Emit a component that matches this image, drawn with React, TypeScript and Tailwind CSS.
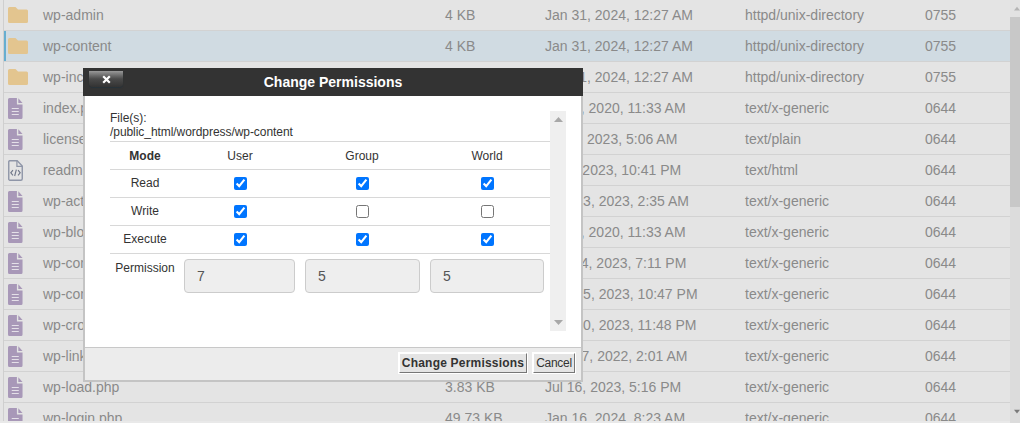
import React from 'react';

const files = [
  { icon: 'folder', name: 'wp-admin', size: '4 KB', date: 'Jan 31, 2024, 12:27 AM', type: 'httpd/unix-directory', perm: '0755' },
  { icon: 'folder', name: 'wp-content', size: '4 KB', date: 'Jan 31, 2024, 12:27 AM', type: 'httpd/unix-directory', perm: '0755', selected: true },
  { icon: 'folder', name: 'wp-includes', size: '4 KB', date: 'Jan 31, 2024, 12:27 AM', type: 'httpd/unix-directory', perm: '0755' },
  { icon: 'file', name: 'index.php', size: '405 bytes', date: 'Feb 6, 2020, 11:33 AM', type: 'text/x-generic', perm: '0644' },
  { icon: 'file', name: 'license.txt', size: '19.91 KB', date: 'Jan 1, 2023, 5:06 AM', type: 'text/plain', perm: '0644' },
  { icon: 'code', name: 'readme.html', size: '7.4 KB', date: 'Jul 5, 2023, 10:41 PM', type: 'text/html', perm: '0644' },
  { icon: 'file', name: 'wp-activate.php', size: '7.39 KB', date: 'May 13, 2023, 2:35 AM', type: 'text/x-generic', perm: '0644' },
  { icon: 'file', name: 'wp-blog-header.php', size: '351 bytes', date: 'Feb 6, 2020, 11:33 AM', type: 'text/x-generic', perm: '0644' },
  { icon: 'file', name: 'wp-comments-post.php', size: '2.32 KB', date: 'Mar 14, 2023, 7:11 PM', type: 'text/x-generic', perm: '0644' },
  { icon: 'file', name: 'wp-config-sample.php', size: '2.94 KB', date: 'May 15, 2023, 10:47 PM', type: 'text/x-generic', perm: '0644' },
  { icon: 'file', name: 'wp-cron.php', size: '5.51 KB', date: 'May 30, 2023, 11:48 PM', type: 'text/x-generic', perm: '0644' },
  { icon: 'file', name: 'wp-links-opml.php', size: '2.44 KB', date: 'Nov 27, 2022, 2:01 AM', type: 'text/x-generic', perm: '0644' },
  { icon: 'file', name: 'wp-load.php', size: '3.83 KB', date: 'Jul 16, 2023, 5:16 PM', type: 'text/x-generic', perm: '0644' },
  { icon: 'file', name: 'wp-login.php', size: '49.73 KB', date: 'Jan 16, 2024, 8:23 AM', type: 'text/x-generic', perm: '0644' },
];

const rows = [
  { label: 'Read', user: true, group: true, world: true },
  { label: 'Write', user: true, group: false, world: false },
  { label: 'Execute', user: true, group: true, world: true },
];

function FileIcon({ kind }: { kind: string }) {
  if (kind === 'folder') {
    return (
      <svg width="20" height="16" viewBox="0 0 20 16" className="ml-[4px] shrink-0">
        <path d="M1.5 0H7.5L10 2.5H18.5A1.5 1.5 0 0 1 20 4V14.5A1.5 1.5 0 0 1 18.5 16H1.5A1.5 1.5 0 0 1 0 14.5V1.5A1.5 1.5 0 0 1 1.5 0Z" fill="#e3c58f" />
      </svg>
    );
  }
  if (kind === 'code') {
    return (
      <svg width="15" height="21" viewBox="0 0 16 21" preserveAspectRatio="none" className="ml-[4px] shrink-0">
        <path d="M1.8 0.8H9.8L15.2 6V18.7A1.5 1.5 0 0 1 13.7 20.2H1.8A1.2 1.2 0 0 1 0.8 18.7V2.2A1.2 1.2 0 0 1 1.8 0.8Z" fill="none" stroke="#8f96a8" strokeWidth="1.5" />
        <path d="M9.5 1V6.3H15" fill="none" stroke="#8f96a8" strokeWidth="1.3" />
        <path d="M5.3 10.2L3 12.8L5.3 15.4M10.7 10.2L13 12.8L10.7 15.4M8.9 9.6L7.1 16" fill="none" stroke="#6f7688" strokeWidth="1.2" />
      </svg>
    );
  }
  return (
    <svg width="15" height="21" viewBox="0 0 16 21" preserveAspectRatio="none" className="ml-[4px] shrink-0">
      <path d="M1.5 0H9.5V6.5H15.5V19.5A1.5 1.5 0 0 1 14 21H1.5A1.5 1.5 0 0 1 0 19.5V1.5A1.5 1.5 0 0 1 1.5 0Z" fill="#a898b8" />
      <path d="M11 0.3L15.5 5H11Z" fill="#a898b8" />
      <path d="M4 10.5H11.5M4 13.5H11.5M4 16.5H11.5" stroke="#e4e0e8" strokeWidth="1.2" />
    </svg>
  );
}

function FileRow({ file }: { file: (typeof files)[number] }) {
  return (
    <div className={`flex h-[31px] shrink-0 items-center border-b border-[#d2d2d2] ${file.selected ? 'bg-[#d0dbe2] shadow-[inset_2px_0_0_#66aed0]' : ''}`}>
      <div className="flex w-[39px] shrink-0 items-center">
        <FileIcon kind={file.icon} />
      </div>
      <div className="w-[402px] shrink-0">{file.name}</div>
      <div className="w-[100px] shrink-0">{file.size}</div>
      <div className="w-[200px] shrink-0">{file.date}</div>
      <div className="w-[180px] shrink-0">{file.type}</div>
      <div>{file.perm}</div>
    </div>
  );
}

function PermissionDialog() {
  return (
    <div className="absolute left-[83px] top-[68px] flex h-[314px] w-[500px] flex-col border-x-2 border-b-2 border-[#c4c4c4] bg-white text-[12px] leading-[14px] text-[#333]">
      <div className="relative -mx-[2px] flex h-[28px] shrink-0 items-center justify-center bg-[#333] text-[14px] font-bold text-white">
        Change Permissions
        <div className="absolute left-[6px] top-[3px] flex h-[16px] w-[34px] items-center justify-center rounded-b-[4px] bg-gradient-to-b from-[#999] via-[#4a4a4a] to-[#333] shadow-[0_1px_1px_#26323a]">
          <svg width="9" height="9" viewBox="0 0 9 9">
            <path d="M1.2 1.2L7.8 7.8M7.8 1.2L1.2 7.8" stroke="#fff" strokeWidth="2.2" />
          </svg>
        </div>
      </div>

      <div className="flex h-[251px] shrink-0 pl-[25px] pt-[15px]">
        <div className="w-[440px]">
          <div>File(s):</div>
          <div className="h-[16px] tracking-[-0.06px]">/public_html/wordpress/wp-content</div>
          <div className="grid grid-cols-[70px_120px_124px_126px] border-t border-[#d8d8d8] text-center">
            <div className="flex h-[28px] items-center justify-center border-b border-[#d8d8d8] font-bold">Mode</div>
            <div className="flex h-[28px] items-center justify-center border-b border-[#d8d8d8]">User</div>
            <div className="flex h-[28px] items-center justify-center border-b border-[#d8d8d8]">Group</div>
            <div className="flex h-[28px] items-center justify-center border-b border-[#d8d8d8]">World</div>
            {rows.map((row) => (
              <React.Fragment key={row.label}>
                <div className="flex h-[28px] items-center justify-center border-b border-[#d8d8d8] pb-[1px]">{row.label}</div>
                {[row.user, row.group, row.world].map((checked, i) => (
                  <div key={i} className="flex h-[28px] items-center justify-center border-b border-[#d8d8d8] pb-[1px]">
                    <input type="checkbox" defaultChecked={checked} className="m-0" />
                  </div>
                ))}
              </React.Fragment>
            ))}
            <div className="pt-[7px]">Permission</div>
            <div className="pl-[4px] pt-[5px]">
              <div className="flex h-[34px] w-[111px] items-center rounded-[4px] border border-[#ccc] bg-[#eee] pl-[12px] text-[14px] text-[#555]">7</div>
            </div>
            <div className="pl-[5px] pt-[5px]">
              <div className="flex h-[34px] w-[115px] items-center rounded-[4px] border border-[#ccc] bg-[#eee] pl-[12px] text-[14px] text-[#555]">5</div>
            </div>
            <div className="pl-[6px] pt-[5px]">
              <div className="flex h-[34px] w-[114px] items-center rounded-[4px] border border-[#ccc] bg-[#eee] pl-[12px] text-[14px] text-[#555]">5</div>
            </div>
          </div>
        </div>
        <div className="flex h-[220px] w-[16px] flex-col items-center justify-between bg-[#efefef] py-[6px]">
          <svg width="9" height="5" viewBox="0 0 9 5"><path d="M4.5 0L9 5H0Z" fill="#a8a8a8" /></svg>
          <svg width="9" height="5" viewBox="0 0 9 5"><path d="M4.5 5L9 0H0Z" fill="#a8a8a8" /></svg>
        </div>
      </div>

      <div className="flex flex-1 items-center justify-end gap-[6px] border-t border-[#c8c8c8] bg-[#ececec] pb-[2px] pr-[6px]">
        <button className="h-[20px] w-[128px] border border-t-white border-l-white border-r-[#777] border-b-[#777] bg-[#e4e4e4] text-[12px] font-bold tracking-[0.2px] text-[#333] shadow-[0_0_0_1px_#fff]">
          Change Permissions
        </button>
        <button className="h-[20px] w-[42px] border border-t-white border-l-white border-r-[#777] border-b-[#777] bg-[#e4e4e4] text-[12px] tracking-[-0.3px] text-[#333] shadow-[0_0_0_1px_#fff]">
          Cancel
        </button>
      </div>
    </div>
  );
}

export default function App() {
  return (
    <div className="relative h-[423px] w-[1020px] overflow-hidden bg-[#e4e4e4] font-['Liberation_Sans',Arial,sans-serif] text-[14px] text-[#8a8a8a]">
      <div className="flex h-full">
        <div className="flex w-[1010px] flex-col">
          <div className="h-[421px] overflow-hidden pl-[3px]">
            <div className="flex flex-col border-l border-[#cfcfcf]">
              {files.map((file) => (
                <FileRow key={file.name} file={file} />
              ))}
            </div>
          </div>
          <div className="h-[2px] bg-[#e9e9e9]" />
        </div>
        <div className="flex w-[10px] flex-col bg-[#dcdcdc]">
          <div className="flex h-[17px] items-center bg-[#e2e2e2] pl-[4px]">
            <svg width="8" height="5" viewBox="0 0 8 5"><path d="M4 0L8 5H0Z" fill="#b4b4b4" /></svg>
          </div>
          <div className="h-[190px] bg-[#c8c8c8]" />
          <div className="flex flex-1 items-end pb-[9px] pl-[4px]">
            <svg width="8" height="5" viewBox="0 0 8 5"><path d="M4 5L8 0H0Z" fill="#7a7a7a" /></svg>
          </div>
        </div>
      </div>
      <PermissionDialog />
    </div>
  );
}
